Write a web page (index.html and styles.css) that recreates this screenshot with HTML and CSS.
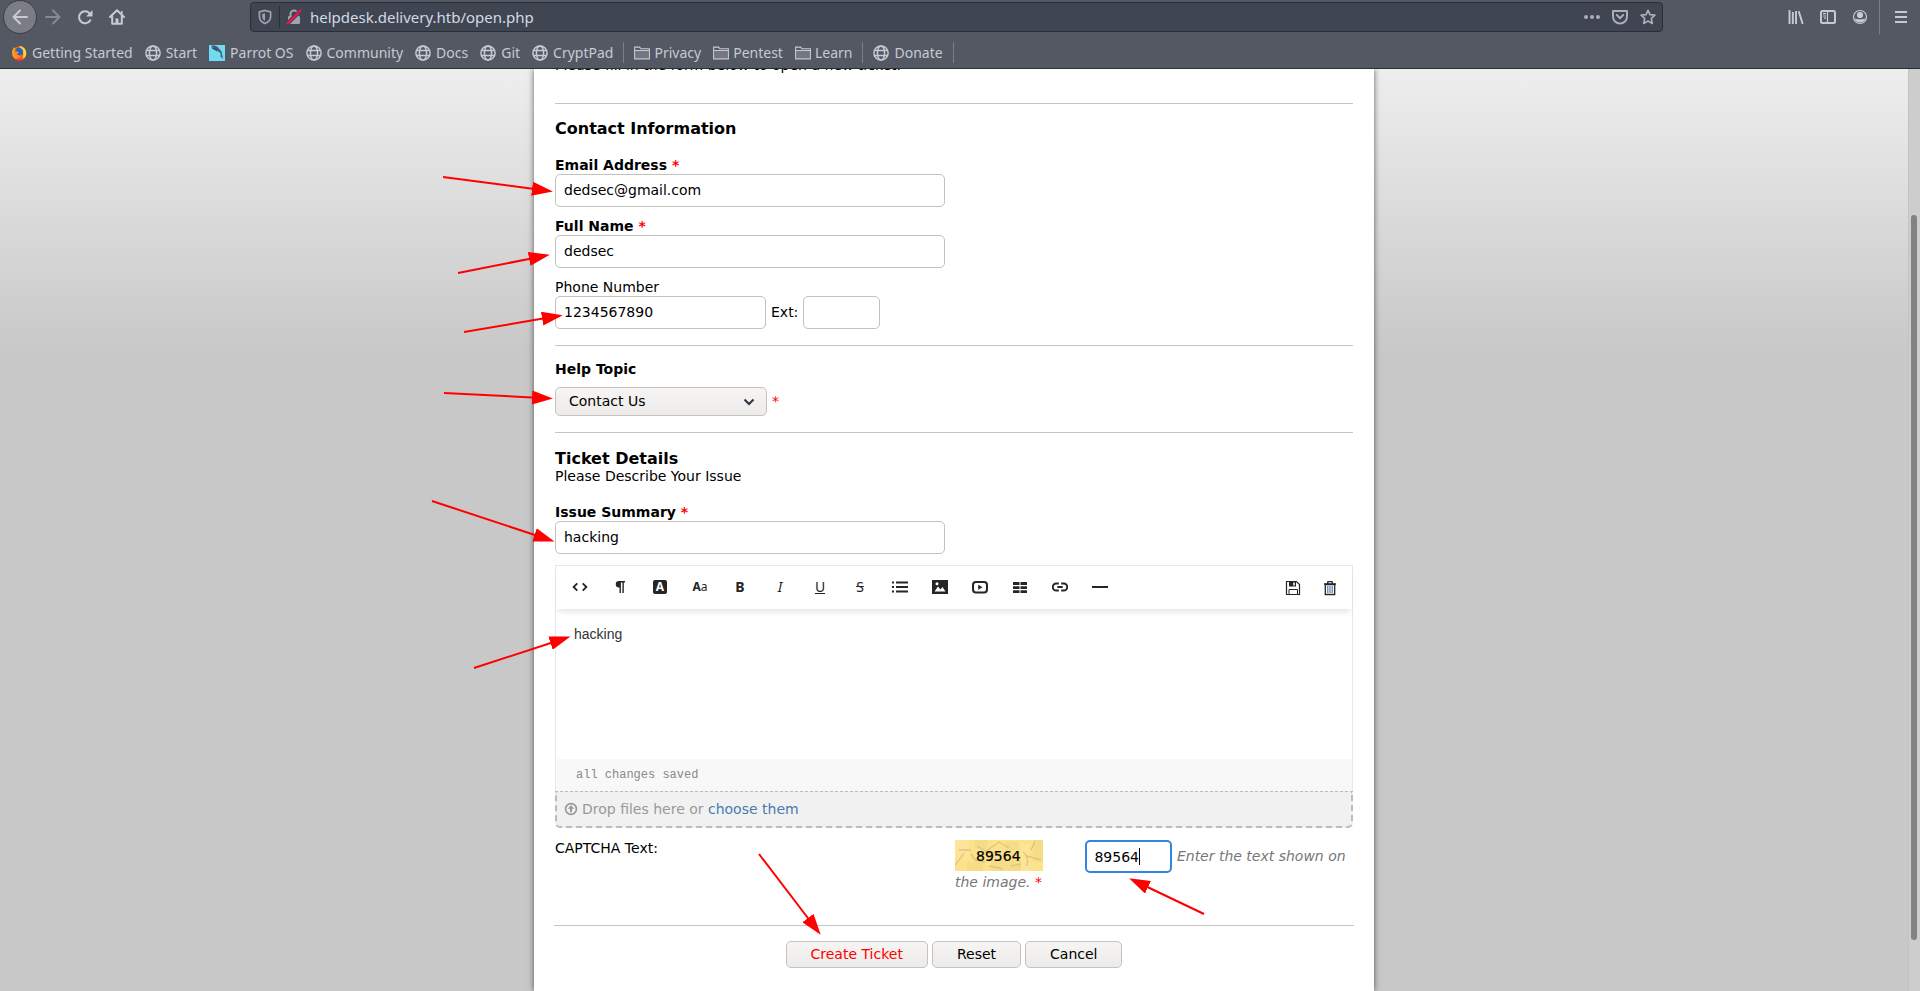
FILE: index.html
```html
<!DOCTYPE html>
<html lang="en">
<head>
<meta charset="utf-8">
<title>Open a New Ticket</title>
<link rel="stylesheet" href="styles.css">
</head>
<body>
<svg class="defs" width="0" height="0" aria-hidden="true">
  <symbol id="globe" viewBox="0 0 16 16"><g fill="none" stroke="currentColor" stroke-width="1.5"><circle cx="8" cy="8" r="7.1"/><ellipse cx="8" cy="8" rx="3.6" ry="7.1"/><path d="M1.6 5.5h12.8M1.6 10.5h12.8"/></g></symbol>
  <symbol id="folder" viewBox="0 0 16 16"><path d="M.6 13.9V2.1h5l1.2 1.6h8.6v10.2zM.6 5.5h14.8" fill="none" stroke="currentColor" stroke-width="1.1"/><path d="M1.2 6h13.6v7.3H1.2z" fill="currentColor" opacity=".28"/></symbol>
</svg>

<header class="chrome">
  <div class="navbar">
    <div class="nav-left">
      <button class="nav-btn back" type="button" aria-label="Back"><svg viewBox="0 0 16 16"><path d="M15 8H1.5M8 1.5 1.5 8 8 14.5" fill="none" stroke="currentColor" stroke-width="2" stroke-linecap="round" stroke-linejoin="round"/></svg></button>
      <button class="nav-btn dim" type="button" aria-label="Forward"><svg viewBox="0 0 16 16"><path d="M1 8h13.5M8 1.5 14.500 8 8 14.5" fill="none" stroke="currentColor" stroke-width="2" stroke-linecap="round" stroke-linejoin="round"/></svg></button>
      <button class="nav-btn" type="button" aria-label="Reload"><svg viewBox="0 0 16 16"><path d="M13.300 11.200A6 6 0 1 1 12.500 4.200" fill="none" stroke="currentColor" stroke-width="2" stroke-linecap="round"/><path d="M15.500 1v6.500H9z" fill="currentColor"/></svg></button>
      <button class="nav-btn" type="button" aria-label="Home"><svg viewBox="0 0 16 16"><path d="M1 8 8 1.200 15 8M3.200 7v7.800h9.600V7" fill="none" stroke="currentColor" stroke-width="2" stroke-linejoin="round" stroke-linecap="round"/><path d="M6.500 9.500h3V15h-3z" fill="currentColor"/><path d="M12 2h1.600v3.500L12 4z" fill="currentColor"/></svg></button>
    </div>
    <div class="urlbar">
      <svg class="u-icon" viewBox="0 0 16 16"><path d="M8 1.500 13.600 3v4.500c0 3.500-2.200 5.700-5.600 7-3.400-1.300-5.600-3.500-5.600-7V3z" fill="none" stroke="currentColor" stroke-width="1.700"/><path d="M8 4.300v7.500C6 10.800 5.200 9.500 5.200 7.500V5z" fill="currentColor"/></svg>
      <span class="u-div"></span>
      <svg class="u-icon" viewBox="0 0 16 16"><path d="M4.500 8V5a3.500 3.500 0 0 1 7 0v3" fill="none" stroke="currentColor" stroke-width="2"/><rect x="2" y="7" width="12" height="8" rx="1.200" fill="currentColor"/><path d="M1.500 14.500 14.500 1.500" stroke="#404552" stroke-width="4"/><path d="M1.500 14.500 14.500 1.500" stroke="#ff0f4b" stroke-width="2" stroke-linecap="round"/></svg>
      <input class="url" type="text" aria-label="Address" value="helpdesk.delivery.htb/open.php">
      <div class="u-actions">
        <button type="button" aria-label="Page actions"><svg viewBox="0 0 16 16" fill="currentColor"><circle cx="2" cy="8" r="2"/><circle cx="8" cy="8" r="2"/><circle cx="14" cy="8" r="2"/></svg></button>
        <button type="button" aria-label="Save to Pocket"><svg viewBox="0 0 16 16"><path d="M1 2h14v5.500a7 7 0 0 1-14 0zM4.800 6 8 9.200 11.200 6" fill="none" stroke="currentColor" stroke-width="2" stroke-linejoin="round" stroke-linecap="round"/></svg></button>
        <button type="button" aria-label="Bookmark this page"><svg viewBox="0 0 16 16"><path d="m8 1.300 2 4.300 4.900.6-3.600 3.200 1 5L8 12l-4.300 2.400 1-5L1.100 6.200 6 5.600z" fill="none" stroke="currentColor" stroke-width="1.700" stroke-linejoin="round"/></svg></button>
      </div>
    </div>
    <div class="nav-right">
      <button type="button" aria-label="Library"><svg viewBox="0 0 16 16"><path d="M1.500 1v14M4.800 3v12M8 2v13M10.700 2.200 14.700 15" fill="none" stroke="currentColor" stroke-width="1.900"/></svg></button>
      <button type="button" aria-label="Sidebars"><svg viewBox="0 0 16 16"><rect x="1" y="2" width="14" height="12" rx="1.500" fill="none" stroke="currentColor" stroke-width="2"/><path d="M7.500 2v12M3 4.700h3M3 7h3M4 9.200h2" stroke="currentColor" stroke-width="1.200"/></svg></button>
      <button type="button" aria-label="Account"><svg viewBox="0 0 16 16"><circle cx="8" cy="8" r="6.500" fill="none" stroke="currentColor" stroke-width="1.200"/><circle cx="8" cy="6" r="3.100" fill="currentColor"/><path d="M3 9.500c.8 0 1.800.8 5 .8s4.200-.8 5-.8c0 2.500-2.200 4-5 4s-5-1.500-5-4z" fill="currentColor"/></svg></button>
      <span class="n-div"></span>
      <button class="menu" type="button" aria-label="Menu"><svg viewBox="0 0 16 16"><path d="M2 3h12M2 8h12M2 13h12" stroke="currentColor" stroke-width="2"/></svg></button>
    </div>
  </div>
  <nav class="bookmarks">
    <a href="#"><svg viewBox="0 0 16 16"><circle cx="8" cy="8.500" r="7" fill="#ff5a1f"/><path d="M8 1c4 0 7.500 3 7.300 7.500C15 12 12.500 15.500 8 15.500c4-2 5-5 4-8S9 3 8 1z" fill="#ffd52e"/><path d="M1.200 6C2 4 2.500 3 3 2c.5 1 1 1.500 2 2l2 3-2 4 3 2c-2 1-5 1-6-2-.8-1.500-1-3-.8-5z" fill="#ff9d1c"/><circle cx="8" cy="7" r="4.200" fill="#2a62c4"/><path d="M3.500 6.500c1.500-.5 2.500 0 4.500.8L6.200 9c.8 1.800 3 1.500 4.800 1-1 2-3 3-5 2.200C4 11.200 3 9 3.500 6.500z" fill="#ff8a16"/><path d="M3 13c3 2.500 7 2 10-1-1 3-3 4-5 4s-4-1-5-3z" fill="#f4274f"/></svg>Getting Started</a>
    <a href="#"><svg><use href="#globe"/></svg>Start</a>
    <a href="#"><svg viewBox="0 0 16 16"><path d="M0 0h16v16H0z" fill="#6fdcf2"/><path d="M2 1c2-.8 5-.5 7 1.500l3.500 4L13 9l1 5-2.500-2.500.2-3L9 6 5.500 4.200z" fill="#4b5670"/><path d="m2 2.500 3.500.7 3.500 3-1 .3C6 4.800 4 4.500 2 2.500z" fill="#39425c"/></svg>Parrot OS</a>
    <a href="#"><svg><use href="#globe"/></svg>Community</a>
    <a href="#"><svg><use href="#globe"/></svg>Docs</a>
    <a href="#"><svg><use href="#globe"/></svg>Git</a>
    <a href="#"><svg><use href="#globe"/></svg>CryptPad</a>
    <span class="b-div"></span>
    <a class="dir" href="#"><svg><use href="#folder"/></svg>Privacy</a>
    <a class="dir" href="#"><svg><use href="#folder"/></svg>Pentest</a>
    <a class="dir" href="#"><svg><use href="#folder"/></svg>Learn</a>
    <span class="b-div"></span>
    <a href="#"><svg><use href="#globe"/></svg>Donate</a>
    <span class="b-div"></span>
  </nav>
</header>

<div class="viewport">
  <main class="page">
    <form class="sheet">
      <div class="fields">
        <p class="intro">Please fill in the form below to open a new ticket.</p>
        <hr class="rule">
        <h3 class="heading first">Contact Information</h3>
        <div class="field">
          <label for="email"><b>Email Address <span class="req">*</span></b></label>
          <input id="email" class="box" type="text" value="dedsec@gmail.com">
        </div>
        <div class="field">
          <label for="name"><b>Full Name <span class="req">*</span></b></label>
          <input id="name" class="box" type="text" value="dedsec">
        </div>
        <div class="field">
          <label for="phone">Phone Number</label>
          <div class="phone-row">
            <input id="phone" class="box phone" type="text" value="1234567890">
            <label for="ext">Ext:</label>
            <input id="ext" class="box ext" type="text">
          </div>
        </div>
        <hr class="rule">
        <label class="topic-label" for="topic"><b>Help Topic</b></label>
        <div class="topic-row">
          <span class="select-wrap">
            <select id="topic" class="select"><option>Contact Us</option></select>
            <svg class="chevron" viewBox="0 0 12 8"><path d="m1.500 1.500 4.500 4.500 4.500-4.500" fill="none" stroke="#2e3440" stroke-width="2"/></svg>
          </span>
          <span class="req">*</span>
        </div>
        <hr class="rule">
        <h3 class="heading">Ticket Details</h3>
        <p class="sub">Please Describe Your Issue</p>
        <div class="field">
          <label for="summary"><b>Issue Summary <span class="req">*</span></b></label>
          <input id="summary" class="box" type="text" value="hacking">
        </div>

        <div class="editor">
          <div class="toolbar">
            <button type="button" aria-label="HTML"><svg viewBox="0 0 16 16"><path d="M5.300 4.300 1.600 8l3.700 3.700M10.700 4.300 14.400 8l-3.700 3.700" fill="none" stroke="currentColor" stroke-width="1.800"/></svg></button>
            <button type="button" aria-label="Format"><svg viewBox="0 0 16 16"><path d="M7 2h6v1.400h-1.200V14h-1.400V3.400H8.900V14H7.500V8.500H7A3.250 3.250 0 0 1 7 2z" fill="currentColor"/></svg></button>
            <button class="fill-a" type="button" aria-label="Text color"><span>A</span></button>
            <button class="aa" type="button" aria-label="Font size"><b>A</b>a</button>
            <button class="g" type="button" aria-label="Bold"><b>B</b></button>
            <button class="g" type="button" aria-label="Italic"><i>I</i></button>
            <button class="g" type="button" aria-label="Underline"><u>U</u></button>
            <button class="g" type="button" aria-label="Strikethrough"><s>S</s></button>
            <button type="button" aria-label="Lists"><svg viewBox="0 0 16 16"><path d="M0 3.500h2M4 3.500h12M0 8h2M4 8h12M0 12.500h2M4 12.500h12" stroke="currentColor" stroke-width="1.800"/></svg></button>
            <button type="button" aria-label="Image"><svg viewBox="0 0 16 16"><path fill-rule="evenodd" d="M0 1h16v14H0zM2.500 12.500h11L10.500 8l-2 2.500L6 7.500zM5 3.300a1.500 1.500 0 1 0 0 3 1.500 1.500 0 0 0 0-3z" fill="currentColor"/></svg></button>
            <button type="button" aria-label="Video"><svg viewBox="0 0 16 16"><rect x="1" y="3" width="14" height="10.500" rx="3" fill="none" stroke="currentColor" stroke-width="2"/><path d="m6.200 5.700 4.300 2.500-4.300 2.500z" fill="currentColor"/></svg></button>
            <button type="button" aria-label="Table"><svg viewBox="0 0 16 16"><path d="M1 3h6.500v3H1zm7.500 0H15v3H8.500zM1 7.200h6.500v2.800H1zm7.500 0H15v2.800H8.500zM1 11.200h6.500V14H1zm7.500 0H15V14H8.500z" fill="currentColor"/></svg></button>
            <button type="button" aria-label="Link"><svg viewBox="0 0 16 16"><path d="M6.800 4.500H4.300a3.500 3.500 0 0 0 0 7h2.500M9.200 4.500h2.500a3.500 3.500 0 0 1 0 7H9.200M5.300 8h5.400" fill="none" stroke="currentColor" stroke-width="1.900"/></svg></button>
            <button type="button" aria-label="Line"><svg viewBox="0 0 16 16"><path d="M0 8h16" stroke="currentColor" stroke-width="2"/></svg></button>
            <span class="spacer"></span>
            <button class="side" type="button" aria-label="Save draft"><svg viewBox="0 0 16 16"><path d="M1.500 1.500h10l3 3v10h-13z" fill="none" stroke="currentColor" stroke-width="1.200"/><path d="M4 2h7v4.500H4z" fill="currentColor"/><path d="M8.200 2.500h1.600v3H8.200z" fill="#fff"/><path d="M4 14V9.500h8.500V14" fill="none" stroke="currentColor"/></svg></button>
            <button class="side" type="button" aria-label="Delete draft"><svg viewBox="0 0 16 16"><path d="M2 4h12M5.500 3.500 6 1.700h4l.5 1.800" fill="none" stroke="currentColor" stroke-width="1.300"/><path d="M3.300 4.500h9.400v10H3.300z" fill="none" stroke="currentColor" stroke-width="1.300"/><path d="M5.800 6v7M8 6v7M10.200 6v7" stroke="#3f76a8" stroke-width="1.100"/></svg></button>
          </div>
          <textarea class="message" aria-label="Message">hacking</textarea>
          <div class="status">all changes saved</div>
        </div>
        <div class="dropzone">
          <svg viewBox="0 0 14 14"><circle cx="7" cy="7" r="5.400" fill="none" stroke="currentColor" stroke-width="1.700"/><path d="M7 3.300 10.200 6.800H8v3.400H6V6.800H3.800z" fill="currentColor"/></svg>
          <span>Drop files here or <a href="#">choose them</a></span>
        </div>
        <div class="captcha-row">
          <label for="captcha">CAPTCHA Text:</label>
          <div class="captcha-cell">
            <svg class="captcha-img" viewBox="0 0 88 31" role="img" aria-label="89564">
              <path fill="#fde28c" d="M0 0h88v31H0z"/>
              <path fill="#f5dc88" d="M20 0h12v9H20zM36 20h30v11H36zM78 0h10v22H78zM12 22h16v9H12zM50 2h14v8H50z"/>
              <path fill="#fbe7a0" d="M0 0h14v20H0zM66 4h9v27h-9z" opacity=".6"/>
              <path d="M4 10h12M0 25q6-7 9-12M16 14l4 6 10 2M22 6l12 7 6-1M30 12l14-10M44 2l10 6M68 12q6 4 4 14M72 16l14 4M76 10l4-9M34 26l14 3M56 26l10-2" fill="none" stroke="#dec57a" stroke-width="1.400"/>
              <text x="21" y="21" class="captcha-text">89564</text>
            </svg>
            <span class="captcha-wrap"><input id="captcha" class="box captcha" type="text" value="89564"></span>
            <em>Enter the text shown on the image.</em> <span class="req">*</span>
          </div>
        </div>
      </div>
      <hr class="rule wide">
      <div class="actions">
        <button class="btn primary" type="submit">Create Ticket</button>
        <button class="btn" type="reset">Reset</button>
        <button class="btn" type="button">Cancel</button>
      </div>
      <svg class="arrows" viewBox="534 69 840 922" aria-hidden="true">
        <defs><marker id="head" markerUnits="userSpaceOnUse" markerWidth="22" markerHeight="14" refX="10" refY="7" orient="auto"><path d="M0 0 21 7 0 14z" fill="#f00"/></marker></defs>
        <g stroke="#f00" stroke-width="2">
          <path d="M443 177 542 190" marker-end="url(#head)"/>
          <path d="M458 273 539 257" marker-end="url(#head)"/>
          <path d="M464 332 552 317" marker-end="url(#head)"/>
          <path d="M444 393 542 398" marker-end="url(#head)"/>
          <path d="M432 501 544 538" marker-end="url(#head)"/>
          <path d="M474 668 560 640" marker-end="url(#head)"/>
          <path d="M759 854 814 926" marker-end="url(#head)"/>
          <path d="M1204 914 1139 883" marker-end="url(#head)"/>
        </g>
      </svg>
    </form>
  </main>
  <div class="scrollbar"><span class="thumb"></span></div>
</div>
</body>
</html>
```
FILE: styles.css
```css
* { box-sizing: border-box; }
body {
  margin: 0;
  height: 100vh;
  display: flex;
  flex-direction: column;
  overflow: hidden;
  font: 14px/17px "DejaVu Sans", sans-serif;
  color: #000;
}
button, input, select, textarea { font: inherit; color: inherit; margin: 0; }
button { padding: 0; border: 0; background: none; display: grid; place-items: center; }
p, h3 { margin: 0; }
.defs { position: absolute; }

/* browser chrome */
.chrome {
  background: #545862;
  border-bottom: 1px solid #2b2e37;
  color: #c5cad4;
  font: 14px/20px "Noto Sans", sans-serif;
}
.navbar { display: flex; height: 34px; align-items: center; }
.navbar svg { width: 16px; height: 16px; display: block; }
.nav-left { width: 250px; display: flex; align-items: center; padding-left: 3px; }
.nav-btn { width: 32px; height: 32px; }
.nav-btn.back { width: 34px; height: 34px; background: #7a7d84; border: 1px solid #3a3e48; border-radius: 50%; }
.nav-btn.dim { color: #868a93; }
.urlbar {
  flex: 1;
  height: 30px;
  display: flex;
  align-items: center;
  background: #404552;
  border: 1px solid #2b2e37;
  border-radius: 4px;
  padding: 0 6px;
}
.u-icon { color: #9ea3ae; flex: none; }
.u-div { width: 1px; height: 22px; background: #2b2e37; margin: 0 6px; }
.url { flex: 1; border: 0; background: none; outline: 0; padding: 0 0 0 8px; color: #d3dae3; font-size: 15px; }
.u-actions { display: flex; gap: 12px; color: #a9aeb9; }
.nav-right { width: 257px; display: flex; align-items: center; justify-content: flex-end; padding-right: 3px; }
.nav-right button { width: 32px; height: 32px; }
.n-div { width: 1px; height: 34px; background: #7a7e88; margin: 0 5px 0 3px; }
.bookmarks { height: 34px; display: flex; align-items: center; gap: 12px; padding: 3px 11px 0; }
.bookmarks a { display: flex; align-items: center; gap: 5px; color: #c5cad4; text-decoration: none; }
.bookmarks .dir { gap: 4px; }
.bookmarks svg { width: 16px; height: 16px; flex: none; }
.b-div { width: 1px; height: 21px; margin: 0 -2px; background: #7a7e88; }

/* document area */
.viewport { flex: 1; min-height: 0; display: flex; background: #c8c8c8 linear-gradient(#eee, #c8c8c8) no-repeat 0 0 / 100% 284px; }
.page { flex: 1; display: flex; justify-content: center; overflow: hidden; }
.sheet {
  position: relative;
  width: 840px;
  min-height: 100%;
  background: #fff;
  padding: 0 20px;
  box-shadow: 0 0 6px rgba(0, 0, 0, .6);
}
.fields { padding: 0 1px; }
.intro { margin-top: -12px; }
.rule { margin: 0; border: 0; border-top: 1px solid #c4c4c4; }
.intro + .rule { margin-top: 29px; }
.heading { font-size: 16px; line-height: 19px; }
.rule + .heading { margin-top: 16px; }
.rule + .heading.first { margin: 15px 0 19px; }
.field { display: flex; flex-direction: column; margin-bottom: 11px; }
.req { color: #f00; }
.box {
  width: 390px;
  height: 33px;
  padding: 0 8px 2px;
  border: 1px solid #c4c1bd;
  border-radius: 5px;
  background: #fff;
  outline: 0;
}
.phone-row { display: flex; align-items: center; gap: 5px; margin-bottom: 5px; }
.phone { width: 211px; }
.ext { width: 77px; }
.topic-label { display: block; margin: 15px 0 9px; }
.topic-row { display: flex; align-items: center; gap: 5px; margin-bottom: 16px; }
.select-wrap { position: relative; }
.select, .btn {
  border: 1px solid #c6c1bb;
  border-radius: 5px;
  background: linear-gradient(#f6f5f4, #edebe9);
}
.select { display: block; appearance: none; width: 212px; height: 29px; padding: 0 13px; }
.chevron { position: absolute; right: 12px; top: 11px; width: 12px; height: 8px; pointer-events: none; }
.sub { margin-bottom: 19px; }

/* rich text editor */
.editor { border: 1px solid #e8e8e8; border-bottom: 0; }
.toolbar { display: flex; height: 43px; padding: 0 4px; color: #252525; box-shadow: 0 5px 6px -2px rgba(0, 0, 0, .1); }
.toolbar button { width: 40px; padding-bottom: 2px; }
.toolbar .side { width: 37px; padding-bottom: 0; }
.toolbar svg { width: 16px; height: 16px; }
.spacer { flex: 1; }
.fill-a span { width: 14px; height: 14px; border-radius: 2px; background: #252525; color: #fff; font: bold 12px/14px "Noto Sans", sans-serif; }
.toolbar .aa { font: 12px/16px "Noto Sans", sans-serif; display: flex; align-items: center; justify-content: center; }
.g { font: 14px/16px "Noto Sans", sans-serif; }
.message {
  display: block;
  width: 100%;
  height: 150px;
  padding: 16px 18px;
  border: 0;
  outline: 0;
  resize: none;
  background: none;
  color: #333;
  font: 14px/18px "Liberation Sans", sans-serif;
}
.status { background: #f8f8f8; color: #888; padding: 8px 20px; font: 12px/16px "Liberation Mono", monospace; }
.dropzone {
  display: flex;
  align-items: center;
  gap: 4px;
  height: 37px;
  padding: 0 7px;
  background: #f1f1f1;
  border: 2px dashed #bbb;
  border-top-width: 1px;
  border-radius: 0 0 5px 5px;
  color: #999;
}
.dropzone svg { width: 14px; height: 14px; }
.dropzone a { color: #4a7ab0; text-decoration: none; }
.captcha-row { display: grid; grid-template-columns: 1fr 1fr; padding-top: 12px; }
.captcha-cell { padding-left: 1px; color: #777; line-height: 19px; }
.captcha-img { width: 88px; height: 31px; margin: 0 38px 2px 0; vertical-align: middle; }
.captcha-text { font: 14px "DejaVu Sans", sans-serif; fill: #000; stroke: #000; stroke-width: .2px; }
.captcha-wrap { position: relative; display: inline-block; vertical-align: middle; }
.captcha-wrap::after { content: ""; position: absolute; left: 54px; top: 8px; width: 1px; height: 17px; background: #000; }
.captcha { display: block; width: 87px; border: 2px solid #3584e4; padding: 0 7px; color: #000; }
.rule.wide { margin-top: 33px; }
.actions { display: flex; justify-content: center; gap: 4px; margin-top: 15px; }
.btn { height: 27px; padding: 0 24px 1px; }
.primary { color: #f00; }

/* annotations */
.arrows { position: absolute; left: 0; top: 0; width: 840px; height: 922px; overflow: visible; pointer-events: none; }

.scrollbar { width: 12px; background: #cdcdcd; border-left: 1px solid #c9c4bb; padding: 146px 3px 51px 2px; display: flex; }
.thumb { flex: 1; border-radius: 3px; background: #7f8383; }
```
